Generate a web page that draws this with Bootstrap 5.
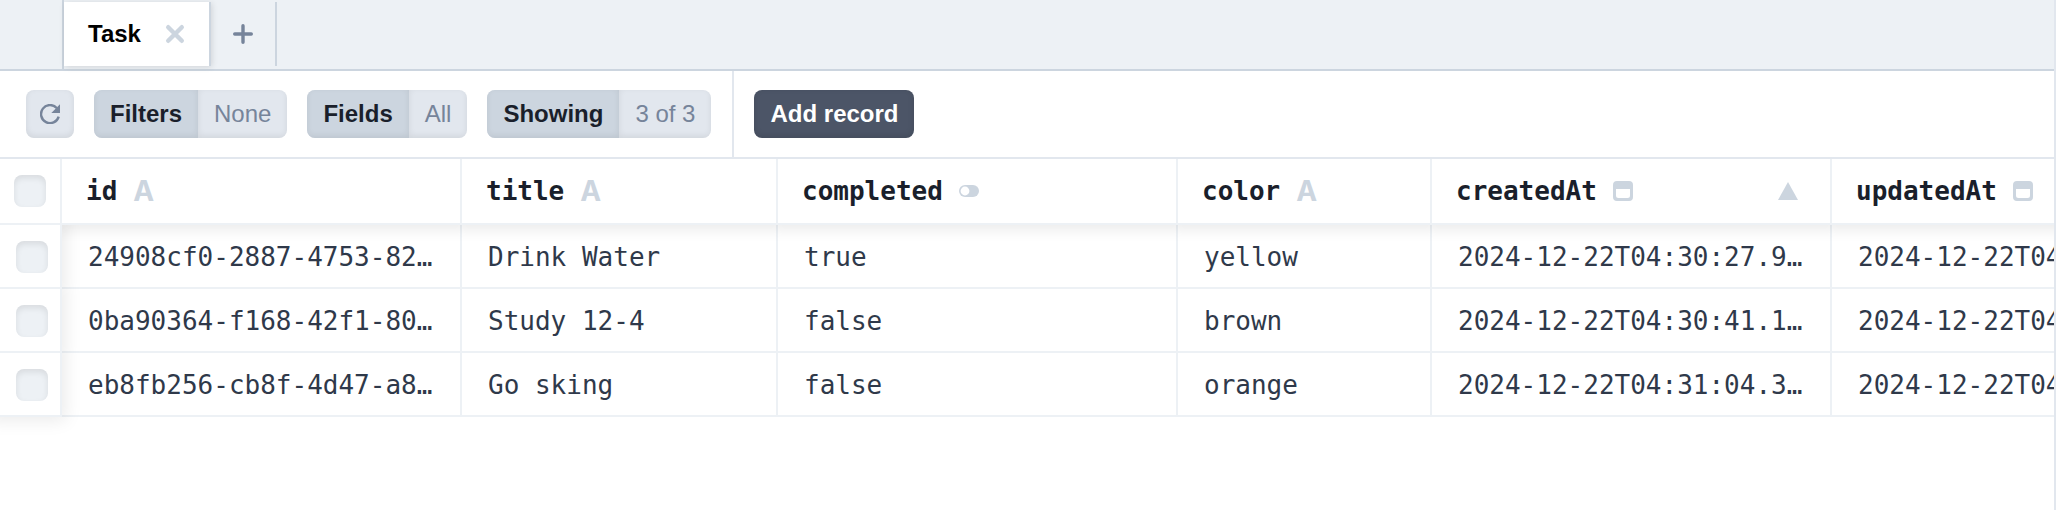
<!DOCTYPE html>
<html lang="en">
<head>
<meta charset="utf-8">
<meta name="viewport" content="width=device-width, initial-scale=1">
<title>Task</title>
<link rel="stylesheet" href="https://cdn.jsdelivr.net/npm/bootstrap@5.3.0/dist/css/bootstrap.min.css">
<style>
  :root { --g200: #edf1f5; --g300: #e2e7ee; --g400: #ccd5df; --g600: #76849a; --g700: #4c5567; --g800: #2f394a; --g900: #1a1f2b; }
  body { font-family: "Liberation Sans", Arial, sans-serif; font-size: 24px; line-height: 32px; color: var(--g900); background: #fff; }
  .app { border-right: 2px solid var(--g300); margin-right: 2px; overflow: hidden; }
  svg { display: block; flex: none; }

  .plain { border: 0; background: none; padding: 0; }
  .tabbar { background: var(--g200); border-bottom: 2px solid var(--g400); height: 71px; padding-left: 62px; }
  .tab-edge { border-left: 2px solid var(--g400); }
  .tab-item { height: 64px; margin-top: 2px; border-right: 2px solid var(--g400); }
  .tab-open { background: #fff; color: #000; padding: 0 24px; gap: 24px; box-shadow: 1px 1px 6px rgba(0,0,0,.12); }
  .tab-open a { color: inherit; }
  .tab-new { width: 66px; }

  .tools { border-bottom: 2px solid var(--g300); height: 88px; }
  .tools-left { padding: 0 21px 0 26px; gap: 20px; border-right: 2px solid var(--g300); }
  .pill { border: 0; padding: 0; height: 48px; border-radius: 8px; overflow: hidden; background: var(--g300); color: var(--g600); }
  .pill > span { padding: 8px 16px; box-shadow: inset 0 -2px 6px rgba(0,0,0,.08); }
  .pill > .pill-key { background: var(--g400); color: var(--g900); font-weight: 700; }
  .pill-icon { width: 48px; box-shadow: inset 0 -2px 6px rgba(0,0,0,.08); }
  .add { height: 48px; border: 0; border-radius: 8px; padding: 0 16px; margin-left: 20px; background: var(--g700); color: #fff; font-weight: 700; box-shadow: inset 0 -2px 6px rgba(0,0,0,.12); }

  .grid-wrap { overflow: hidden; padding-bottom: 24px; }
  .records { table-layout: fixed; width: 2232px; border-collapse: separate; border-spacing: 0; font-family: "DejaVu Sans Mono", monospace; font-size: 26px; }
  .records th, .records td { border: solid var(--g200); border-width: 0 2px 2px 0; white-space: nowrap; overflow: hidden; background: #fff; }
  .records thead th { height: 66px; padding: 0 32px 0 24px; position: relative; z-index: 1; box-shadow: 0 -4px 14px 8px rgba(0,0,0,.09); clip-path: inset(0 0 -24px 0); }
  .records thead th:first-child { padding: 0 0 0 14px; box-shadow: none; }
  .records tbody td { height: 64px; padding: 2px 26px 0; color: var(--g800); }
  .records tbody td:first-child { padding: 2px 0 0 16px; position: relative; z-index: 2; box-shadow: -4px 0 16px 8px rgba(0,0,0,.08); clip-path: inset(0 -24px 0 0); }
  .records tbody tr:last-child td:first-child { clip-path: inset(0 -24px -24px 0); box-shadow: -4px -4px 16px 8px rgba(0,0,0,.08); }
  .w-check { width: 62px; } .w-wide { width: 400px; } .w-title { width: 316px; } .w-color { width: 254px; }
  .head { gap: 16px; color: var(--g900); font-weight: 700; }
  .kind-a { font-family: Inter, "Liberation Sans", sans-serif; font-size: 28px; font-weight: 700; color: var(--g400); }
  .tick { appearance: none; display: block; width: 32px; height: 32px; margin: 0; border-radius: 8px; background: var(--g200); box-shadow: inset 0 3px 6px rgba(0,0,0,.09); }
  .tick:checked { background: var(--g600); }
</style>
</head>
<body>
<div class="app min-vh-100">
  <nav class="tabbar d-flex" aria-label="Open models">
    <div class="tab-edge d-flex">
      <div class="tab-item tab-open d-flex align-items-center">
        <a href="#task" class="fw-bold text-decoration-none">Task</a>
        <button type="button" class="plain" aria-label="Close Task">
          <svg width="20" height="20" viewBox="0 0 20 20" fill="none" stroke="#ccd5df" stroke-width="4.4" stroke-linecap="round"><path d="M3.2 3.2l13.6 13.6M16.8 3.2L3.2 16.8"/></svg>
        </button>
      </div>
      <button type="button" class="plain tab-item tab-new d-flex align-items-center justify-content-center" aria-label="New tab">
        <svg width="20" height="20" viewBox="0 0 20 20" fill="none" stroke="#76849a" stroke-width="3.4" stroke-linecap="round"><path d="M10 1.7v16.6M1.7 10h16.6"/></svg>
      </button>
    </div>
  </nav>

  <div class="tools d-flex align-items-stretch">
    <div class="tools-left d-flex align-items-center">
      <button type="button" class="pill pill-icon d-flex align-items-center justify-content-center" aria-label="Reload">
        <svg width="20" height="20" viewBox="0 0 20 20"><path d="M18.7 12.6A9 9 0 1 1 16.7 4" fill="none" stroke="#76849a" stroke-width="2.4"/><path d="M20 .3V9h-8.7z" fill="#76849a"/></svg>
      </button>
      <button type="button" class="pill d-flex"><span class="pill-key">Filters</span><span>None</span></button>
      <button type="button" class="pill d-flex"><span class="pill-key">Fields</span><span>All</span></button>
      <button type="button" class="pill d-flex"><span class="pill-key">Showing</span><span>3 of 3</span></button>
    </div>
    <button type="button" class="add align-self-center">Add record</button>
  </div>

  <div class="grid-wrap">
    <table class="records">
      <colgroup><col class="w-check"><col class="w-wide"><col class="w-title"><col class="w-wide"><col class="w-color"><col class="w-wide"><col class="w-wide"></colgroup>
      <thead>
        <tr>
          <th><input type="checkbox" class="tick" aria-label="Select all records"></th>
          <th scope="col"><div class="head d-flex align-items-center">id<span class="kind-a">A</span></div></th>
          <th scope="col"><div class="head d-flex align-items-center">title<span class="kind-a">A</span></div></th>
          <th scope="col"><div class="head d-flex align-items-center">completed
            <svg width="20" height="12" viewBox="0 0 20 12"><rect width="20" height="12" rx="6" fill="#ccd5df"/><circle cx="6" cy="6" r="4.4" fill="#fff"/></svg></div></th>
          <th scope="col"><div class="head d-flex align-items-center">color<span class="kind-a">A</span></div></th>
          <th scope="col" aria-sort="ascending"><div class="head d-flex align-items-center">createdAt
            <svg width="20" height="20" viewBox="0 0 20 20"><path fill="#ccd5df" fill-rule="evenodd" d="M4 0h12a4 4 0 0 1 4 4v12a4 4 0 0 1-4 4H4a4 4 0 0 1-4-4V4a4 4 0 0 1 4-4zM3 8v6.5A2.5 2.5 0 0 0 5.5 17h9a2.5 2.5 0 0 0 2.5-2.5V8z"/></svg>
            <svg class="ms-auto" width="20" height="18" viewBox="0 0 20 18"><path fill="#ccd5df" d="M10 0l10 18H0z"/></svg></div></th>
          <th scope="col"><div class="head d-flex align-items-center">updatedAt
            <svg width="20" height="20" viewBox="0 0 20 20"><path fill="#ccd5df" fill-rule="evenodd" d="M4 0h12a4 4 0 0 1 4 4v12a4 4 0 0 1-4 4H4a4 4 0 0 1-4-4V4a4 4 0 0 1 4-4zM3 8v6.5A2.5 2.5 0 0 0 5.5 17h9a2.5 2.5 0 0 0 2.5-2.5V8z"/></svg></div></th>
        </tr>
      </thead>
      <tbody>
        <tr><td><input type="checkbox" class="tick" aria-label="Select Drink Water"></td><td>24908cf0-2887-4753-82…</td><td>Drink Water</td><td>true</td><td>yellow</td><td>2024-12-22T04:30:27.9…</td><td>2024-12-22T04:30:27.9…</td></tr>
        <tr><td><input type="checkbox" class="tick" aria-label="Select Study 12-4"></td><td>0ba90364-f168-42f1-80…</td><td>Study 12-4</td><td>false</td><td>brown</td><td>2024-12-22T04:30:41.1…</td><td>2024-12-22T04:30:41.1…</td></tr>
        <tr><td><input type="checkbox" class="tick" aria-label="Select Go sking"></td><td>eb8fb256-cb8f-4d47-a8…</td><td>Go sking</td><td>false</td><td>orange</td><td>2024-12-22T04:31:04.3…</td><td>2024-12-22T04:31:04.3…</td></tr>
      </tbody>
    </table>
  </div>
</div>
<script src="https://cdn.jsdelivr.net/npm/bootstrap@5.3.0/dist/js/bootstrap.bundle.min.js"></script>
</body>
</html>
